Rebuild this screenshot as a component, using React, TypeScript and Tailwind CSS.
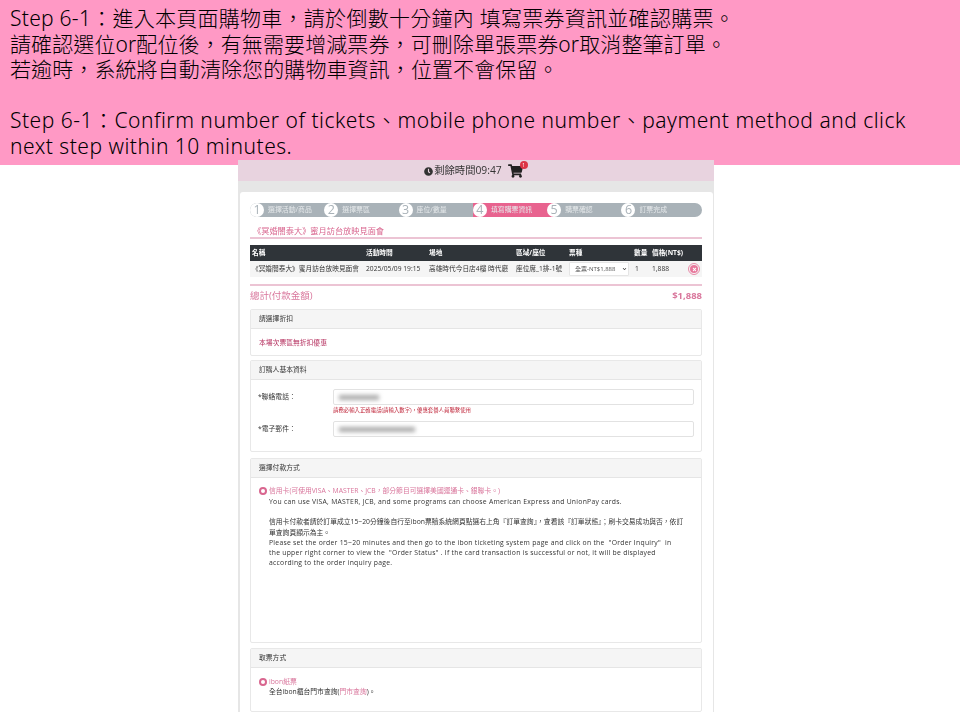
import { FaChevronDown, FaClock, FaShoppingCart, FaTimes } from "react-icons/fa";

const font = { fontFamily: '"Open Sans","Noto Sans CJK TC",sans-serif' };

const steps = [
  { n: "1", t: "選擇活動/商品" },
  { n: "2", t: "選擇票區" },
  { n: "3", t: "座位/數量" },
  { n: "4", t: "填寫購票資訊", active: true },
  { n: "5", t: "購票確認" },
  { n: "6", t: "訂票完成" },
];

function Panel({ title, className, children }: { title: string; className: string; children: React.ReactNode }) {
  return (
    <section className={`border border-[#e8e8e8] rounded-[2px] flex flex-col ${className}`}>
      <div className="h-[19px] shrink-0 bg-[#f5f5f5] border-b border-[#e5e5e5] pl-[8px] flex items-center text-[6.8px] text-[#333]">
        {title}
      </div>
      <div className="flex-1 min-h-0">{children}</div>
    </section>
  );
}

function Radio() {
  return <span className="w-[8px] h-[8px] mt-[1px] shrink-0 rounded-full border-2 border-[#d9668f] bg-white" />;
}

export default function App() {
  return (
    <div className="h-[720px] overflow-hidden bg-white" style={font}>
      <header
        className="h-[165px] bg-[#ff99c5] pl-[10px] pt-[6px] pr-[40px] text-[21px] leading-[25.5px] text-black font-light"
        style={{ fontFamily: '"Noto Sans","Noto Sans CJK TC",sans-serif' }}
      >
        <p className="tracking-[0.27px]">Step 6-1：進入本頁面購物車，請於倒數十分鐘內 填寫票券資訊並確認購票。</p>
        <p className="tracking-[0.1px]">請確認選位or配位後，有無需要增減票券，可刪除單張票券or取消整筆訂單。</p>
        <p className="tracking-[0.1px]">若逾時，系統將自動清除您的購物車資訊，位置不會保留。</p>
        <p className="h-[25.5px]" />
        <p className="tracking-[0.5px]">Step 6-1：Confirm number of tickets、mobile phone number、payment method and click next step within 10 minutes.</p>
      </header>

      <main className="relative -mt-[5px] ml-[238px] w-[476px] h-[552px] bg-[#e6e6e6] blur-[0.35px]">
        <div className="h-[21px] bg-[#e8d3df] flex items-center justify-center pt-[1px] pr-[5px] text-[10.3px] text-[#333]">
          <FaClock className="w-[9px] h-[9px] mr-[1px] text-[#333]" />
          <span>剩餘時間09:47</span>
          <span className="relative ml-[6px]">
            <FaShoppingCart className="w-[15px] h-[14px] text-[#222]" />
            <span className="absolute -right-[5px] -top-[3px] w-[8px] h-[8px] rounded-full bg-[#dc3545] text-white text-[5px] leading-[8px] text-center">1</span>
          </span>
        </div>

        <div className="mt-[11px] mx-[1.5px] h-[520px] bg-white rounded-t-[3px] pt-[11px] px-[10.5px]">
          <ol className="h-[14px] rounded-full bg-[#a9b2b8] flex">
            {steps.map((s) => (
              <li
                key={s.n}
                className={`shrink-0 flex items-center text-[6.9px] text-[#e6e9eb] ${s.active ? "w-[81.3px] -mr-[7px] bg-[#e8638f]" : "w-[74.3px]"}`}
              >
                <span className="relative w-[14px] h-[14px] shrink-0 rounded-full bg-white text-[#a9b2b8] text-[12.5px] leading-[14px] text-center">{s.n}</span>
                <span className="ml-[4px] whitespace-nowrap">{s.t}</span>
              </li>
            ))}
          </ol>

          <h1 className="mt-[8px] pl-[3px] text-[8.2px] leading-[12px] text-[#d9668f] h-[12px] border-b-2 border-[#ecc4d4] box-content">
            《冥婚闇泰大》蜜月訪台放映見面會
          </h1>

          <div className="mt-[6px] h-[16px] bg-[#2f3439] text-white text-[6.7px] font-bold grid grid-cols-[114px_63px_87px_53px_65px_18px_1fr] pl-[2px] items-center">
            <span>名稱</span><span>活動時間</span><span>場地</span><span>區域/座位</span><span>票種</span><span>數量</span><span>價格(NT$)</span>
          </div>
          <div className="h-[16px] bg-[#f5f5f5] text-[#333] text-[6.7px] grid grid-cols-[114px_63px_87px_53px_65px_18px_50px] pl-[2px] items-center whitespace-nowrap">
            <span>《冥婚闇泰大》蜜月訪台放映見面會</span>
            <span>2025/05/09 19:15</span>
            <span>高雄時代今日店4樓 時代廳</span>
            <span>座位席_1排-1號</span>
            <span className="relative w-[60px] h-[14px]">
              <select className="appearance-none w-full h-full bg-white border border-[#e5e5e5] rounded-[1px] text-[6px] text-[#555] pl-[5px]" style={font}>
                <option>全票-NT$1,888</option>
              </select>
              <FaChevronDown className="absolute right-[2px] top-[5px] w-[5px] h-[4px] text-[#333] pointer-events-none" />
            </span>
            <span className="pl-[1px]">1</span>
            <span className="flex items-center justify-between pr-[2px]">
              1,888
              <span className="w-[12px] h-[12px] rounded-full border border-[#e88aa8] flex items-center justify-center">
                <span className="w-[8px] h-[8px] rounded-full bg-[#e8789c] flex items-center justify-center">
                  <FaTimes className="w-[5px] h-[5px] text-white" />
                </span>
              </span>
            </span>
          </div>

          <div className="mt-[7px] border-t-2 border-[#ecc4d4] pb-[3px] h-[25px] flex items-center justify-between text-[#d9769c]">
            <span className="text-[9.5px]">總計(付款金額)</span>
            <span className="text-[9.5px] font-bold">$1,888</span>
          </div>

          <Panel title="請選擇折扣" className="h-[47px]">
            <p className="pl-[8px] pt-[9px] text-[6.8px] leading-[10px] text-[#b5305f]">本場次票區無折扣優惠</p>
          </Panel>

          <Panel title="訂購人基本資料" className="mt-[4px] h-[92px]">
            <div className="pt-[9px] pl-[7px] pr-[7px] text-[6.8px] text-[#333]">
              <div className="flex items-center h-[16px]">
                <span className="w-[75px]">*聯絡電話：</span>
                <div className="flex-1 h-[16px] border border-[#e2e2e2] rounded-[2px] flex items-center pl-[5px]">
                  <span className="w-[40px] h-[5px] bg-[#aaa] blur-[2px]" />
                </div>
              </div>
              <p className="ml-[75px] h-[16px] pt-[1px] leading-[9px] text-[5.4px] text-[#c0283c] whitespace-nowrap">請務必輸入正確電話(請輸入數字)，優惠套餐人員聯繫使用</p>
              <div className="flex items-center h-[16px]">
                <span className="w-[75px]">*電子郵件：</span>
                <div className="flex-1 h-[16px] border border-[#e2e2e2] rounded-[2px] flex items-center pl-[5px]">
                  <span className="w-[76px] h-[5px] bg-[#aaa] blur-[2px]" />
                </div>
              </div>
            </div>
          </Panel>

          <Panel title="選擇付款方式" className="mt-[6px] h-[185px]">
            <div className="pt-[8px] pl-[8px] pr-[8px] flex gap-[2px] text-[6.8px] leading-[10.2px] text-[#333]">
              <Radio />
              <div className="min-w-0 whitespace-nowrap">
                <p className="mb-[1px] text-[#d9769c]">信用卡(可使用VISA、MASTER、JCB，部分節目可選擇美國運通卡、銀聯卡。)</p>
                <p className="tracking-[0.27px]">You can use VISA, MASTER, JCB, and some programs can choose American Express and UnionPay cards.</p>
                <p className="mt-[10px]">信用卡付款者請於訂單成立15~20分鐘後自行至ibon票贖系統網頁點選右上角『訂單查詢』，查看該『訂單狀態』；刷卡交易成功與否，依訂<br />單查詢頁顯示為主。</p>
                <p className="tracking-[0.27px]">Please set the order 15~20 minutes and then go to the ibon ticketing system page and click on the &nbsp;"Order Inquiry" &nbsp;in<br />
                  the upper right corner to view the &nbsp;"Order Status" . If the card transaction is successful or not, it will be displayed<br />
                  according to the order inquiry page.</p>
              </div>
            </div>
          </Panel>

          <Panel title="取票方式" className="mt-[5px] h-[64px]">
            <div className="pt-[9px] pl-[8px] flex gap-[2px] text-[6.8px] leading-[10.2px] text-[#333]">
              <Radio />
              <div>
                <p className="text-[#d9769c]">ibon紙票</p>
                <p>全台ibon櫃台門市查詢(<span className="text-[#d9769c]">門市查詢</span>)。</p>
              </div>
            </div>
          </Panel>
        </div>
      </main>
    </div>
  );
}
